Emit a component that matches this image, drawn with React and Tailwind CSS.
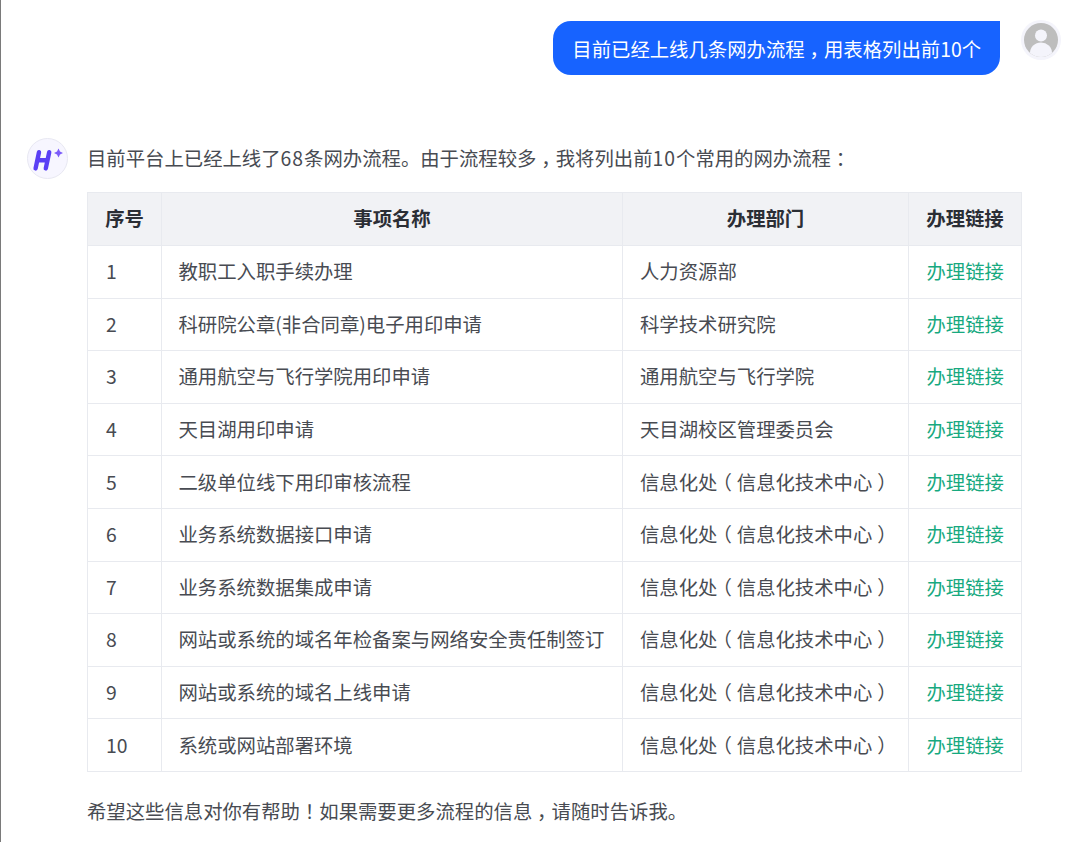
import React from "react";

const rows = [
  ["1", "教职工入职手续办理", "人力资源部"],
  ["2", "科研院公章(非合同章)电子用印申请", "科学技术研究院"],
  ["3", "通用航空与飞行学院用印申请", "通用航空与飞行学院"],
  ["4", "天目湖用印申请", "天目湖校区管理委员会"],
  ["5", "二级单位线下用印审核流程", "信息化处（信息化技术中心）"],
  ["6", "业务系统数据接口申请", "信息化处（信息化技术中心）"],
  ["7", "业务系统数据集成申请", "信息化处（信息化技术中心）"],
  ["8", "网站或系统的域名年检备案与网络安全责任制签订", "信息化处（信息化技术中心）"],
  ["9", "网站或系统的域名上线申请", "信息化处（信息化技术中心）"],
  ["10", "系统或网站部署环境", "信息化处（信息化技术中心）"],
];

// the font in the picture centres its full-width punctuation in the cell:
// half-width glyph plus a quarter em each side
const Cn = ({ text }) =>
  text.split(/([，：！（）])/).map((part, i) =>
    /^[，：！（）]$/.test(part) ? (
      <span key={i} className="px-[0.25em] [font-feature-settings:'halt']">
        {part}
      </span>
    ) : (
      part
    )
  );

const th = "border border-[#e8eaef] font-bold text-center text-[#2b2e35] px-[16px]";
const td = "border border-[#e8eaef] px-[17px] text-left font-normal";

const App = () => {
  return (
    <div className="relative w-[1080px] h-[842px] overflow-hidden bg-white border-l border-[#7a7a7a] text-[19.36px] text-[#484b52] font-['Noto_Sans_CJK_SC','Noto_Sans',sans-serif]">
      <div className="flex justify-end items-start pt-[20px] pr-[19px] gap-[21px]">
        <div className="flex items-center mt-[1px] h-[54px] pl-[19px] pr-[19px] pt-[4px] bg-[#1763ff] text-white rounded-[18px] rounded-tr-none whitespace-nowrap">
          <span>
            <Cn text="目前已经上线几条网办流程，用表格列出前10个" />
          </span>
        </div>
        <div className="w-[40px] h-[40px] rounded-full bg-[#f4f4fb] flex items-center justify-center">
          <svg width="34" height="34" viewBox="0 0 34 34">
            <defs>
              <clipPath id="av">
                <circle cx="17" cy="17" r="17" />
              </clipPath>
            </defs>
            <g clipPath="url(#av)">
              <rect width="34" height="34" fill="#bdbdbd" />
              <circle cx="17" cy="12.5" r="6" fill="#f4f4fb" />
              <ellipse cx="17" cy="30" rx="11" ry="10.5" fill="#f4f4fb" />
            </g>
          </svg>
        </div>
      </div>

      <div className="flex items-start mt-[63px] pl-[26px]">
        <div className="w-[41px] h-[41px] shrink-0 rounded-full bg-[#f7f6ff] border border-[#e8e8f2] flex items-center justify-center">
          <svg width="30" height="24" viewBox="0 0 30 24" className="overflow-visible">
            <path d="M6 5.2 L2.6 21.4 M16.2 5.2 L12.8 21.4 M4.2 13.2 L14.5 13.2" stroke="#5a3ff5" strokeWidth="4.4" strokeLinecap="round" fill="none" />
            <path d="M25.5 1.5 L27 4.5 L30 6 L27 7.5 L25.5 10.5 L24 7.5 L21 6 L24 4.5 Z" fill="#7c5cfa" />
          </svg>
        </div>
        <div className="ml-[19px] w-[936px]">
          <p className="h-[42px] leading-[42px] -mt-[1px] whitespace-nowrap">
            目前平台上已经上线了<span className="tracking-[1px]">68</span>条网办流程。由于流程较多
            <Cn text="，" />
            我将列出前<span className="tracking-[1px]">10</span>个常用的网办流程
            <Cn text="：" />
          </p>
          <table className="mt-[13px] w-[934px] border-collapse table-fixed">
            <colgroup>
              <col className="w-[74px]" />
              <col className="w-[461px]" />
              <col className="w-[286px]" />
              <col className="w-[113px]" />
            </colgroup>
            <thead>
              <tr className="h-[53px] bg-[#f1f2f5]">
                <th className={th}>序号</th>
                <th className={th}>事项名称</th>
                <th className={th}>办理部门</th>
                <th className={th + " whitespace-nowrap"}>办理链接</th>
              </tr>
            </thead>
            <tbody>
              {rows.map((row) => (
                <tr key={row[0]} className="h-[52.6px]">
                  <td className={td + " pl-[18px]"}>{row[0]}</td>
                  <td className={td + " pl-[16.5px] whitespace-nowrap"}>{row[1]}</td>
                  <td className={td + " whitespace-nowrap"}>
                    <Cn text={row[2]} />
                  </td>
                  <td className={td + " pl-[17.5px] text-[#17a97f] whitespace-nowrap"}>办理链接</td>
                </tr>
              ))}
            </tbody>
          </table>
          <p className="mt-[20px] leading-[38px] whitespace-nowrap">
            <Cn text="希望这些信息对你有帮助！如果需要更多流程的信息，请随时告诉我。" />
          </p>
        </div>
      </div>
    </div>
  );
};

export default App;
